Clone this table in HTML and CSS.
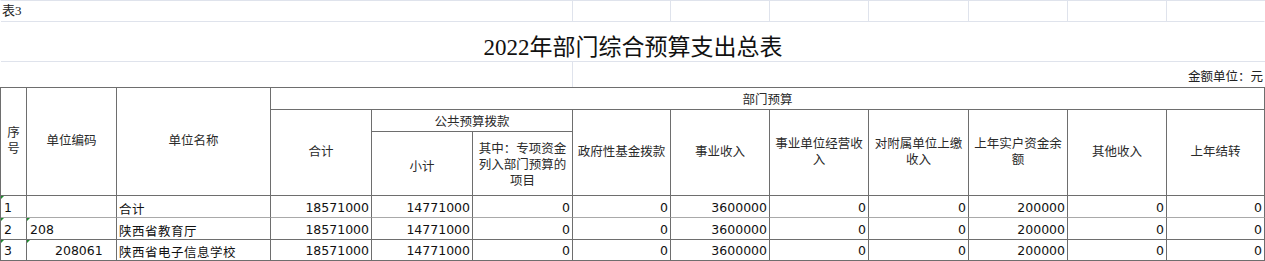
FILE: index.html
```html
<!DOCTYPE html>
<html lang="zh-CN">
<head>
<meta charset="utf-8">
<title>2022年部门综合预算支出总表</title>
<link rel="stylesheet" href="styles.css">
</head>
<body>
<div class="sheet">
  <div class="top">
    <div class="tc span6 caption">表3</div>
    <div class="tc"></div>
    <div class="tc"></div>
    <div class="tc"></div>
    <div class="tc"></div>
    <div class="tc"></div>
    <div class="tc"></div>
    <div class="tc noright"></div>
    <div class="tc full title">2022年部门综合预算支出总表</div>
    <div class="tc span6 row3"></div>
    <div class="tc span7 row3 noright unit">金额单位：元</div>
  </div>

  <div class="grid">
    <div class="c h rs3 narrow">序号</div>
    <div class="c h rs3">单位编码</div>
    <div class="c h rs3">单位名称</div>
    <div class="c h cs10 dept">部门预算</div>

    <div class="c h rs2 up">合计</div>
    <div class="c h cs2">公共预算拨款</div>
    <div class="c h rs2 up">政府性基金拨款</div>
    <div class="c h rs2 up">事业收入</div>
    <div class="c h rs2 up">事业单位经营收入</div>
    <div class="c h rs2 up">对附属单位上缴收入</div>
    <div class="c h rs2 up">上年实户资金余额</div>
    <div class="c h rs2 up">其他收入</div>
    <div class="c h rs2 up">上年结转</div>

    <div class="c h down">小计</div>
    <div class="c h">其中：专项资金列入部门预算的项目</div>

    <div class="c d l mark sep">1</div>
    <div class="c d l sep"></div>
    <div class="c d l zh sep">合计</div>
    <div class="c d n sep">18571000</div>
    <div class="c d n sep">14771000</div>
    <div class="c d n sep">0</div>
    <div class="c d n sep">0</div>
    <div class="c d n sep">3600000</div>
    <div class="c d n sep">0</div>
    <div class="c d n sep">0</div>
    <div class="c d n sep">200000</div>
    <div class="c d n sep">0</div>
    <div class="c d n sep">0</div>

    <div class="c d l mark">2</div>
    <div class="c d l mark">208</div>
    <div class="c d l zh">陕西省教育厅</div>
    <div class="c d n">18571000</div>
    <div class="c d n">14771000</div>
    <div class="c d n">0</div>
    <div class="c d n">0</div>
    <div class="c d n">3600000</div>
    <div class="c d n">0</div>
    <div class="c d n">0</div>
    <div class="c d n">200000</div>
    <div class="c d n">0</div>
    <div class="c d n">0</div>

    <div class="c d l mark">3</div>
    <div class="c d l mark indent">208061</div>
    <div class="c d l zh">陕西省电子信息学校</div>
    <div class="c d n">18571000</div>
    <div class="c d n">14771000</div>
    <div class="c d n">0</div>
    <div class="c d n">0</div>
    <div class="c d n">3600000</div>
    <div class="c d n">0</div>
    <div class="c d n">0</div>
    <div class="c d n">200000</div>
    <div class="c d n">0</div>
    <div class="c d n">0</div>
  </div>
</div>
</body>
</html>
```

FILE: styles.css
```css
* { box-sizing: border-box; }

html, body {
  margin: 0;
  padding: 0;
  background: #ffffff;
}

body {
  font-family: "Noto Sans CJK SC", "DejaVu Sans", sans-serif;
  color: #1a1a1a;
  width: 1265px;
  height: 261px;
  overflow: hidden;
}

.sheet {
  width: 1265px;
}

/* ---------- top area (light spreadsheet grid) ---------- */
.top {
  display: grid;
  grid-template-columns: 26px 90px 154px 101px 101px 100px 98px 99px 99px 100px 99px 99px 98px;
  grid-template-rows: 21px 40px 25px;
  border-top: 1px solid #dfe3ec;
  border-left: 1px solid transparent;
}

.tc {
  border-right: 1px solid #dfe3ec;
  border-bottom: 1px solid #dfe3ec;
}

.tc.noright { border-right-color: transparent; }
.tc.row3 { border-bottom: none; }

.span6 { grid-column: span 6; }
.span7 { grid-column: span 7; }
.full  { grid-column: span 13; border-right: none; }

.caption {
  font-family: "Liberation Serif", "Noto Sans CJK SC", serif;
  font-size: 13px;
  line-height: 20px;
  padding-left: 1px;
  color: #222;
}

.title {
  font-family: "Liberation Serif", "Noto Sans CJK SC", serif;
  font-size: 23px;
  display: flex;
  align-items: center;
  justify-content: center;
  padding-top: 7px;
  color: #111;
  letter-spacing: 0;
}

.unit {
  display: flex;
  align-items: center;
  justify-content: flex-end;
  font-size: 12.5px;
  color: #222;
  padding-top: 2px;
  padding-right: 1px;
}

/* ---------- main table ---------- */
.grid {
  display: grid;
  grid-template-columns: 26px 90px 154px 101px 101px 100px 98px 99px 99px 100px 99px 99px 98px;
  grid-template-rows: 22px 22px 64px 22px 22px 21px;
  border-top: 1px solid #6e6e6e;
  border-left: 1px solid #6e6e6e;
}

.c {
  border-right: 1px solid #6e6e6e;
  border-bottom: 1px solid #6e6e6e;
  position: relative;
  min-width: 0;
}

.rs3 { grid-row: span 3; }
.rs2 { grid-row: span 2; }
.cs10 { grid-column: span 10; }
.cs2 { grid-column: span 2; }

.h {
  display: flex;
  align-items: center;
  justify-content: center;
  text-align: center;
  font-size: 12.5px;
  line-height: 16px;
  color: #2a2a2a;
  padding: 0 4px;
}

.h.narrow { padding: 0 5px; }
.h.rs3 { padding-bottom: 4px; }
.h.up { padding-bottom: 4px; }
.h.down { padding-top: 4px; }

.d {
  display: flex;
  align-items: flex-end;
  font-size: 12.5px;
  line-height: 16px;
  padding-bottom: 1px;
  white-space: nowrap;
  color: #111;
}

.d.l {
  justify-content: flex-start;
  padding-left: 3px;
  font-family: "DejaVu Sans", sans-serif;
}

.d.zh {
  font-family: "Noto Sans CJK SC", sans-serif;
  font-size: 12.5px;
  padding-left: 2px;
  letter-spacing: 0.5px;
  padding-bottom: 0;
}

.d.indent { padding-left: 28px; }

.d.n {
  justify-content: flex-end;
  padding-right: 2px;
  font-family: "DejaVu Sans", sans-serif;
}

.c.sep { border-bottom-color: #a9a9a9; }

/* green "number stored as text" marker */
.mark::before {
  content: "";
  position: absolute;
  top: 0;
  left: 0;
  width: 0;
  height: 0;
  border-top: 3px solid #1e8a2e;
  border-right: 3px solid transparent;
}
```
